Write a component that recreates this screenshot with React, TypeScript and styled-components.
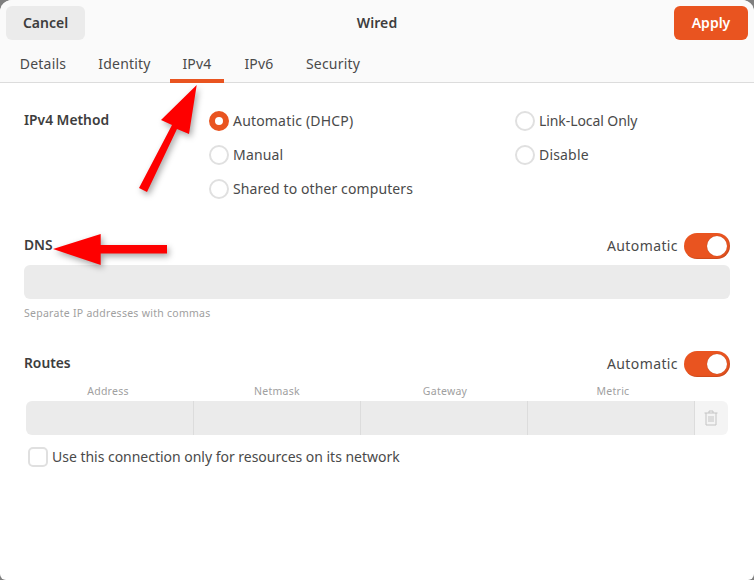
import React from "react";
import styled, { createGlobalStyle } from "styled-components";

const Global = createGlobalStyle`
  html, body { margin: 0; padding: 0; background: #7f7f7f; }
  * { box-sizing: border-box; }
`;

const Frame = styled.div`
  position: relative;
  width: 754px;
  height: 580px;
  overflow: hidden;
  background: #fff;
  border-radius: 12px 12px 6px 6px;
  font-family: "Noto Sans", "Liberation Sans", sans-serif;
  font-size: 14px;
  color: #4a4a4a;
`;

const Header = styled.header`
  height: 83px;
  background: #fafafa;
  border-bottom: 1px solid #dcdcdc;
  display: flex;
  flex-direction: column;
`;

const TitleBar = styled.div`
  display: grid;
  grid-template-columns: 1fr auto 1fr;
  align-items: center;
  padding: 6px 6px 0;
  height: 40px;
`;

const Title = styled.div`
  font-weight: 600;
  font-size: 14px;
  letter-spacing: 0.1px;
  color: #3d3d3d;
  padding-bottom: 1px;
`;

const ActionButton = styled.button<{ $primary?: boolean }>`
  height: 34px;
  width: ${(p) => (p.$primary ? "74px" : "79px")};
  justify-self: ${(p) => (p.$primary ? "end" : "start")};
  border: 0;
  border-radius: 6px;
  padding: 0 0 2px;
  font-family: inherit;
  font-size: 14px;
  font-weight: 600;
  background: ${(p) => (p.$primary ? "#e95420" : "#ebebeb")};
  color: ${(p) => (p.$primary ? "#fff" : "#3d3d3d")};
`;

const Tabs = styled.nav`
  display: flex;
  padding: 0 7px;
  margin-top: 5px;
  height: 37px;
`;

const Tab = styled.div<{ $active?: boolean; $w: number }>`
  width: ${(p) => p.$w}px;
  margin-right: 8px;
  height: 38px;
  display: flex;
  align-items: flex-start;
  justify-content: center;
  padding-top: 9px;
  letter-spacing: 0.2px;
  border-bottom: 4px solid ${(p) => (p.$active ? "#e95420" : "transparent")};
`;

const Body = styled.main`
  padding: 0 24px;
  display: flex;
  flex-direction: column;
`;

const MethodRow = styled.section`
  display: grid;
  grid-template-columns: 185px 306px 1fr;
  margin-top: 28px;
`;

const SectionLabel = styled.div`
  font-weight: 600;
  font-size: 13.8px;
  color: #3d3d3d;
  line-height: 18px;
  padding-bottom: 2px;
`;

const RadioColumn = styled.div`
  display: flex;
  flex-direction: column;
  gap: 14px;
`;

const RadioRow = styled.div`
  display: flex;
  align-items: center;
  gap: 4px;
  height: 20px;
  white-space: nowrap;
`;

const OptionText = styled.span<{ $spacing?: number }>`
  letter-spacing: ${(p) => p.$spacing ?? 0.18}px;
  padding-bottom: 2px;
`;

const Radio = styled.span<{ $on?: boolean }>`
  width: 20px;
  height: 20px;
  border-radius: 50%;
  flex: none;
  background: #fff;
  border: ${(p) => (p.$on ? "6.5px solid #e95420" : "2px solid #e0e0e0")};
`;

const SectionHead = styled.div<{ $top: number }>`
  display: flex;
  align-items: center;
  justify-content: space-between;
  height: 26px;
  margin-top: ${(p) => p.$top}px;
`;

const AutoGroup = styled.div`
  display: flex;
  align-items: center;
  gap: 6px;
`;

const AutoText = styled.span`
  letter-spacing: 0.4px;
  padding-bottom: 2px;
`;

const Toggle = styled.span`
  position: relative;
  width: 46px;
  height: 26px;
  border-radius: 13px;
  background: #e95420;
  box-shadow: inset -1px -1px 1px rgba(0, 0, 0, 0.12);
  display: block;
  &::after {
    content: "";
    position: absolute;
    top: 3px;
    right: 3px;
    width: 20px;
    height: 20px;
    border-radius: 50%;
    background: #fff;
    box-shadow: 0 0 1px rgba(0, 0, 0, 0.3);
  }
`;

const Entry = styled.div`
  height: 34px;
  margin-top: 6px;
  border-radius: 6px;
  background: #ebebeb;
`;

const Helper = styled.div`
  margin-top: 6px;
  font-size: 10.5px;
  line-height: 16px;
  letter-spacing: 0.27px;
  color: #a0a0a0;
`;

const HeadRow = styled.div`
  display: grid;
  grid-template-columns: 164px 174px 162px 174px;
  margin: 0 2px;
`;

const ColHead = styled.div`
  font-size: 10.5px;
  line-height: 16px;
  height: 24px;
  padding-top: 6px;
  text-align: center;
  letter-spacing: 0.25px;
  color: #a0a0a0;
`;

const CellRow = styled.div`
  display: grid;
  grid-template-columns: 168px 167px 167px 167px 33px;
  margin: 0 2px;
`;

const Cell = styled.div<{ $pos?: "first" | "trash" }>`
  height: 34px;
  background: ${(p) => (p.$pos === "trash" ? "#f4f4f4" : "#ebebeb")};
  border-right: ${(p) => (p.$pos === "trash" ? "0" : "1px solid #dcdcdc")};
  border-radius: ${(p) => (p.$pos === "first" ? "6px 0 0 6px" : p.$pos === "trash" ? "0 6px 6px 0" : "0")};
  display: flex;
  align-items: center;
  justify-content: center;
  padding-right: ${(p) => (p.$pos === "trash" ? "2px" : "0")};
`;

const CheckRow = styled.div`
  display: flex;
  align-items: center;
  gap: 4px;
  margin: 12px 0 0 4px;
  height: 20px;
`;

const CheckText = styled.span`
  letter-spacing: -0.02px;
  padding-bottom: 2px;
`;

const CheckBox = styled.span`
  width: 20px;
  height: 20px;
  background: #fff;
  border: 2px solid #e0e0e0;
  border-radius: 5px;
  flex: none;
`;

const ArrowLayer = styled.svg`
  position: absolute;
  inset: 0;
  width: 754px;
  height: 580px;
  pointer-events: none;
  filter: drop-shadow(2px 3px 3px rgba(0, 0, 0, 0.35));
`;

const tabs = [
  { name: "Details", w: 72 },
  { name: "Identity", w: 75 },
  { name: "IPv4", w: 54, active: true },
  { name: "IPv6", w: 54 },
  { name: "Security", w: 78 },
];

const TrashIcon = () => (
  <svg width="14" height="16" viewBox="0 0 14 16" fill="none" stroke="#c4c4c4" strokeWidth="1">
    <path d="M0.5 3h13M5 3V1h4v2M2 3v12h10V3" />
    <path d="M5 6v6M7 6v6M9 6v6" />
  </svg>
);

export default function App() {
  return (
    <Frame>
      <Global />
      <Header>
        <TitleBar>
          <ActionButton>Cancel</ActionButton>
          <Title>Wired</Title>
          <ActionButton $primary>Apply</ActionButton>
        </TitleBar>
        <Tabs>
          {tabs.map((t) => (
            <Tab key={t.name} $w={t.w} $active={t.active}>{t.name}</Tab>
          ))}
        </Tabs>
      </Header>
      <Body>
        <MethodRow>
          <SectionLabel>IPv4 Method</SectionLabel>
          <RadioColumn>
            <RadioRow><Radio $on /><OptionText>Automatic (DHCP)</OptionText></RadioRow>
            <RadioRow><Radio /><OptionText>Manual</OptionText></RadioRow>
            <RadioRow><Radio /><OptionText $spacing={0.1}>Shared to other computers</OptionText></RadioRow>
          </RadioColumn>
          <RadioColumn>
            <RadioRow><Radio /><OptionText $spacing={-0.08}>Link-Local Only</OptionText></RadioRow>
            <RadioRow><Radio /><OptionText>Disable</OptionText></RadioRow>
          </RadioColumn>
        </MethodRow>
        <SectionHead $top={34}>
          <SectionLabel>DNS</SectionLabel>
          <AutoGroup><AutoText>Automatic</AutoText><Toggle /></AutoGroup>
        </SectionHead>
        <Entry />
        <Helper>Separate IP addresses with commas</Helper>
        <SectionHead $top={30}>
          <SectionLabel>Routes</SectionLabel>
          <AutoGroup><AutoText>Automatic</AutoText><Toggle /></AutoGroup>
        </SectionHead>
        <HeadRow>
          <ColHead>Address</ColHead>
          <ColHead>Netmask</ColHead>
          <ColHead>Gateway</ColHead>
          <ColHead>Metric</ColHead>
        </HeadRow>
        <CellRow>
          <Cell $pos="first" />
          <Cell />
          <Cell />
          <Cell />
          <Cell $pos="trash"><TrashIcon /></Cell>
        </CellRow>
        <CheckRow><CheckBox /><CheckText>Use this connection only for resources on its network</CheckText></CheckRow>
      </Body>
      <ArrowLayer viewBox="0 0 754 580">
        <polygon fill="#fe0000" points="196.7,85 189,134 177,129 147,192 139,188 172,125 161,120" />
        <polygon fill="#fe0000" points="53,249 100.7,234 100.7,245 167,245 167,253.5 100.7,253.5 100.7,265" />
      </ArrowLayer>
    </Frame>
  );
}
